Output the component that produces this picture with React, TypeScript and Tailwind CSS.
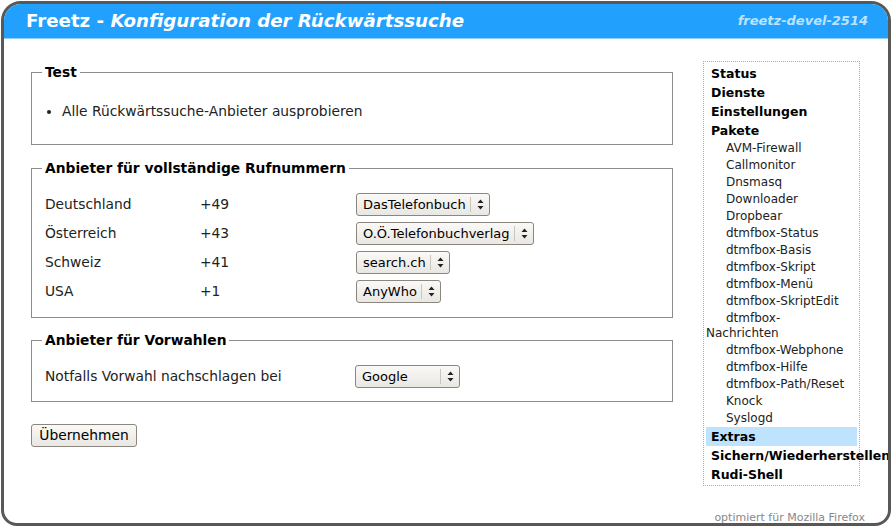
import React from 'react';

const font = { fontFamily: '"DejaVu Sans", Verdana, sans-serif' };

const Select = ({ value, width }: { value: string; width?: number }) => (
  <div
    className="flex items-center h-[23px] border border-[#8b877f] rounded-[3px] bg-gradient-to-b from-[#faf9f7] to-[#e9e7e2] text-[13px] text-black"
    style={width ? { width } : undefined}
  >
    <span className="flex-1 pl-[6px] pr-[4px] whitespace-nowrap">{value}</span>
    <span className="h-[15px] border-l border-[#c9c6bf] mr-[6px]" />
    <svg width="7" height="11" viewBox="0 0 7 11" className="mr-[5px]">
      <path d="M3.5 0.5 L6.5 4 L0.5 4 Z" fill="#222" />
      <path d="M0.5 7 L6.5 7 L3.5 10.5 Z" fill="#222" />
    </svg>
  </div>
);

const Fieldset = ({ legend, children, className }: { legend: string; children: React.ReactNode; className?: string }) => (
  <fieldset className={`border border-[#8c8c8c] px-[10px] ${className ?? ''}`}>
    <legend className="px-[3px] text-[13.8px] font-bold leading-[16px] text-black">{legend}</legend>
    {children}
  </fieldset>
);

const providers = [
  { country: 'Deutschland', code: '+49', value: 'DasTelefonbuch' },
  { country: 'Österreich', code: '+43', value: 'O.Ö.Telefonbuchverlag' },
  { country: 'Schweiz', code: '+41', value: 'search.ch' },
  { country: 'USA', code: '+1', value: 'AnyWho' },
];

const menu: { label: string; sub?: boolean; active?: boolean }[] = [
  { label: 'Status' },
  { label: 'Dienste' },
  { label: 'Einstellungen' },
  { label: 'Pakete' },
  { label: 'AVM-Firewall', sub: true },
  { label: 'Callmonitor', sub: true },
  { label: 'Dnsmasq', sub: true },
  { label: 'Downloader', sub: true },
  { label: 'Dropbear', sub: true },
  { label: 'dtmfbox-Status', sub: true },
  { label: 'dtmfbox-Basis', sub: true },
  { label: 'dtmfbox-Skript', sub: true },
  { label: 'dtmfbox-Menü', sub: true },
  { label: 'dtmfbox-SkriptEdit', sub: true },
  { label: 'dtmfbox-Nachrichten', sub: true },
  { label: 'dtmfbox-Webphone', sub: true },
  { label: 'dtmfbox-Hilfe', sub: true },
  { label: 'dtmfbox-Path/Reset', sub: true },
  { label: 'Knock', sub: true },
  { label: 'Syslogd', sub: true },
  { label: 'Extras', active: true },
  { label: 'Sichern/Wiederherstellen' },
  { label: 'Rudi-Shell' },
];

export default function App() {
  return (
    <div className="w-[894px] h-[528px] bg-white pt-[1px] pl-[1px]" style={font}>
      <div className="w-[890px] h-[525px] border-[3px] border-[#585858] rounded-t-[20px] rounded-b-[16px] overflow-hidden flex flex-col">
        {/* Header */}
        <div className="h-[35px] shrink-0 bg-[#21a1fd] border-b border-[#8dcfff] flex items-center justify-between pl-[22px] pr-[20px]">
          <h1 className="text-[18.2px] font-bold text-white leading-none">
            Freetz - <i>Konfiguration der Rückwärtssuche</i>
          </h1>
          <span className="text-[13px] font-bold italic text-[#bde3ff]">freetz-devel-2514</span>
        </div>

        {/* Body */}
        <div className="flex flex-1 pl-[27px] pr-[28px]">
          <div className="w-[642px] pt-[25px]">
            <Fieldset legend="Test" className="pb-[25px]">
              <ul className="list-disc pl-[20px] pt-[23px] text-[13.8px] leading-[16px] text-[#222]">
                <li>Alle Rückwärtssuche-Anbieter ausprobieren</li>
              </ul>
            </Fieldset>

            <Fieldset legend="Anbieter für vollständige Rufnummern" className="mt-[15px] pt-[14px] pb-[11px]">
              {providers.map((p) => (
                <div key={p.country} className="flex items-center h-[29px] text-[13.8px] text-[#222]">
                  <span className="w-[158px] pl-[3px]">{p.country}</span>
                  <span className="w-[156px]">{p.code}</span>
                  <Select value={p.value} />
                </div>
              ))}
            </Fieldset>

            <Fieldset legend="Anbieter für Vorwahlen" className="mt-[14px] pt-[14px] pb-[10px]">
              <div className="flex items-center h-[29px] text-[13.8px] text-[#222]">
                <span className="w-[313px] pl-[3px]">Notfalls Vorwahl nachschlagen bei</span>
                <Select value="Google" width={105} />
              </div>
            </Fieldset>

            <button className="mt-[22px] h-[23px] w-[106px] border border-[#8b877f] rounded-[3px] bg-gradient-to-b from-[#faf9f7] to-[#e9e7e2] text-[13.8px] text-black">
              Übernehmen
            </button>
          </div>

          <div className="ml-auto w-[157px] mt-[22px] self-start">
            <div className="border border-dotted border-[#a8a8a8] px-[2px] pt-[2px] pb-[1px]">
              {menu.map((m) =>
                m.sub ? (
                  <div key={m.label} className="text-[12px] leading-[15px] py-[1px] indent-[20px] text-[#222]">
                    {m.label === 'dtmfbox-Nachrichten' ? (
                      <>
                        dtmfbox-
                        <br />
                        Nachrichten
                      </>
                    ) : (
                      m.label
                    )}
                  </div>
                ) : (
                  <div
                    key={m.label}
                    className={`text-[12.5px] font-bold leading-[17px] py-[1px] pl-[5px] whitespace-nowrap text-black ${
                      m.active ? 'bg-[#bde3ff]' : ''
                    }`}
                  >
                    {m.label}
                  </div>
                )
              )}
            </div>
          </div>
        </div>

        {/* Footer */}
        <div className="h-[18px] shrink-0 text-right pr-[23px] pt-[7px] text-[11px] leading-[12px] text-[#888]">
          optimiert für Mozilla Firefox
        </div>
      </div>
    </div>
  );
}
